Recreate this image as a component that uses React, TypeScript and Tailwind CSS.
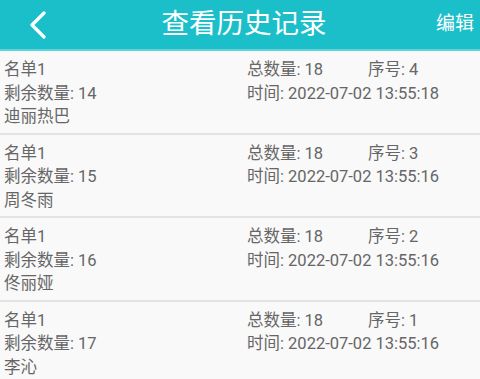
import React from "react";

const rows = [
  { rem: 14, seq: 4, time: "2022-07-02 13:55:18", name: "迪丽热巴" },
  { rem: 15, seq: 3, time: "2022-07-02 13:55:16", name: "周冬雨" },
  { rem: 16, seq: 2, time: "2022-07-02 13:55:16", name: "佟丽娅" },
  { rem: 17, seq: 1, time: "2022-07-02 13:55:16", name: "李沁" },
];

export default function App() {
  return (
    <div
      className="w-[480px] h-[379px] overflow-hidden bg-[#f9f9f9]"
      style={{ fontFamily: "Roboto, 'Noto Sans CJK SC', sans-serif" }}
    >
      <div className="h-[51px] bg-[#1bbfca] border-b-2 border-[#5fd3da] flex items-center relative">
        <div className="w-[80px] pl-[29px] flex items-center">
          <svg width="18" height="28" viewBox="0 0 18 28">
            <path d="M15 2 L3 14 L15 26" fill="none" stroke="white" strokeWidth="3.2" strokeLinecap="round" strokeLinejoin="round" />
          </svg>
        </div>
        <div className="flex-1 text-center text-white text-[27.5px] leading-none pl-[8px] pb-[2px]">查看历史记录</div>
        <div className="w-[80px] text-right pr-[6px] text-white text-[19px] leading-none pb-[2px]">编辑</div>
      </div>
      {rows.map((r, i) => (
        <div key={i} className="border-b-2 border-[#e3e3e3] pt-[7px] pb-[4px] pl-[4px] text-[16.5px] leading-[23.5px] text-[#666]">
          <div className="flex">
            <div className="w-[243px]">
              <div>名单1</div>
              <div>剩余数量: {r.rem}</div>
              <div>{r.name}</div>
            </div>
            <div>
              <div className="flex">
                <div className="w-[121px]">总数量: 18</div>
                <div>序号: {r.seq}</div>
              </div>
              <div>时间: {r.time}</div>
            </div>
          </div>
        </div>
      ))}
    </div>
  );
}
